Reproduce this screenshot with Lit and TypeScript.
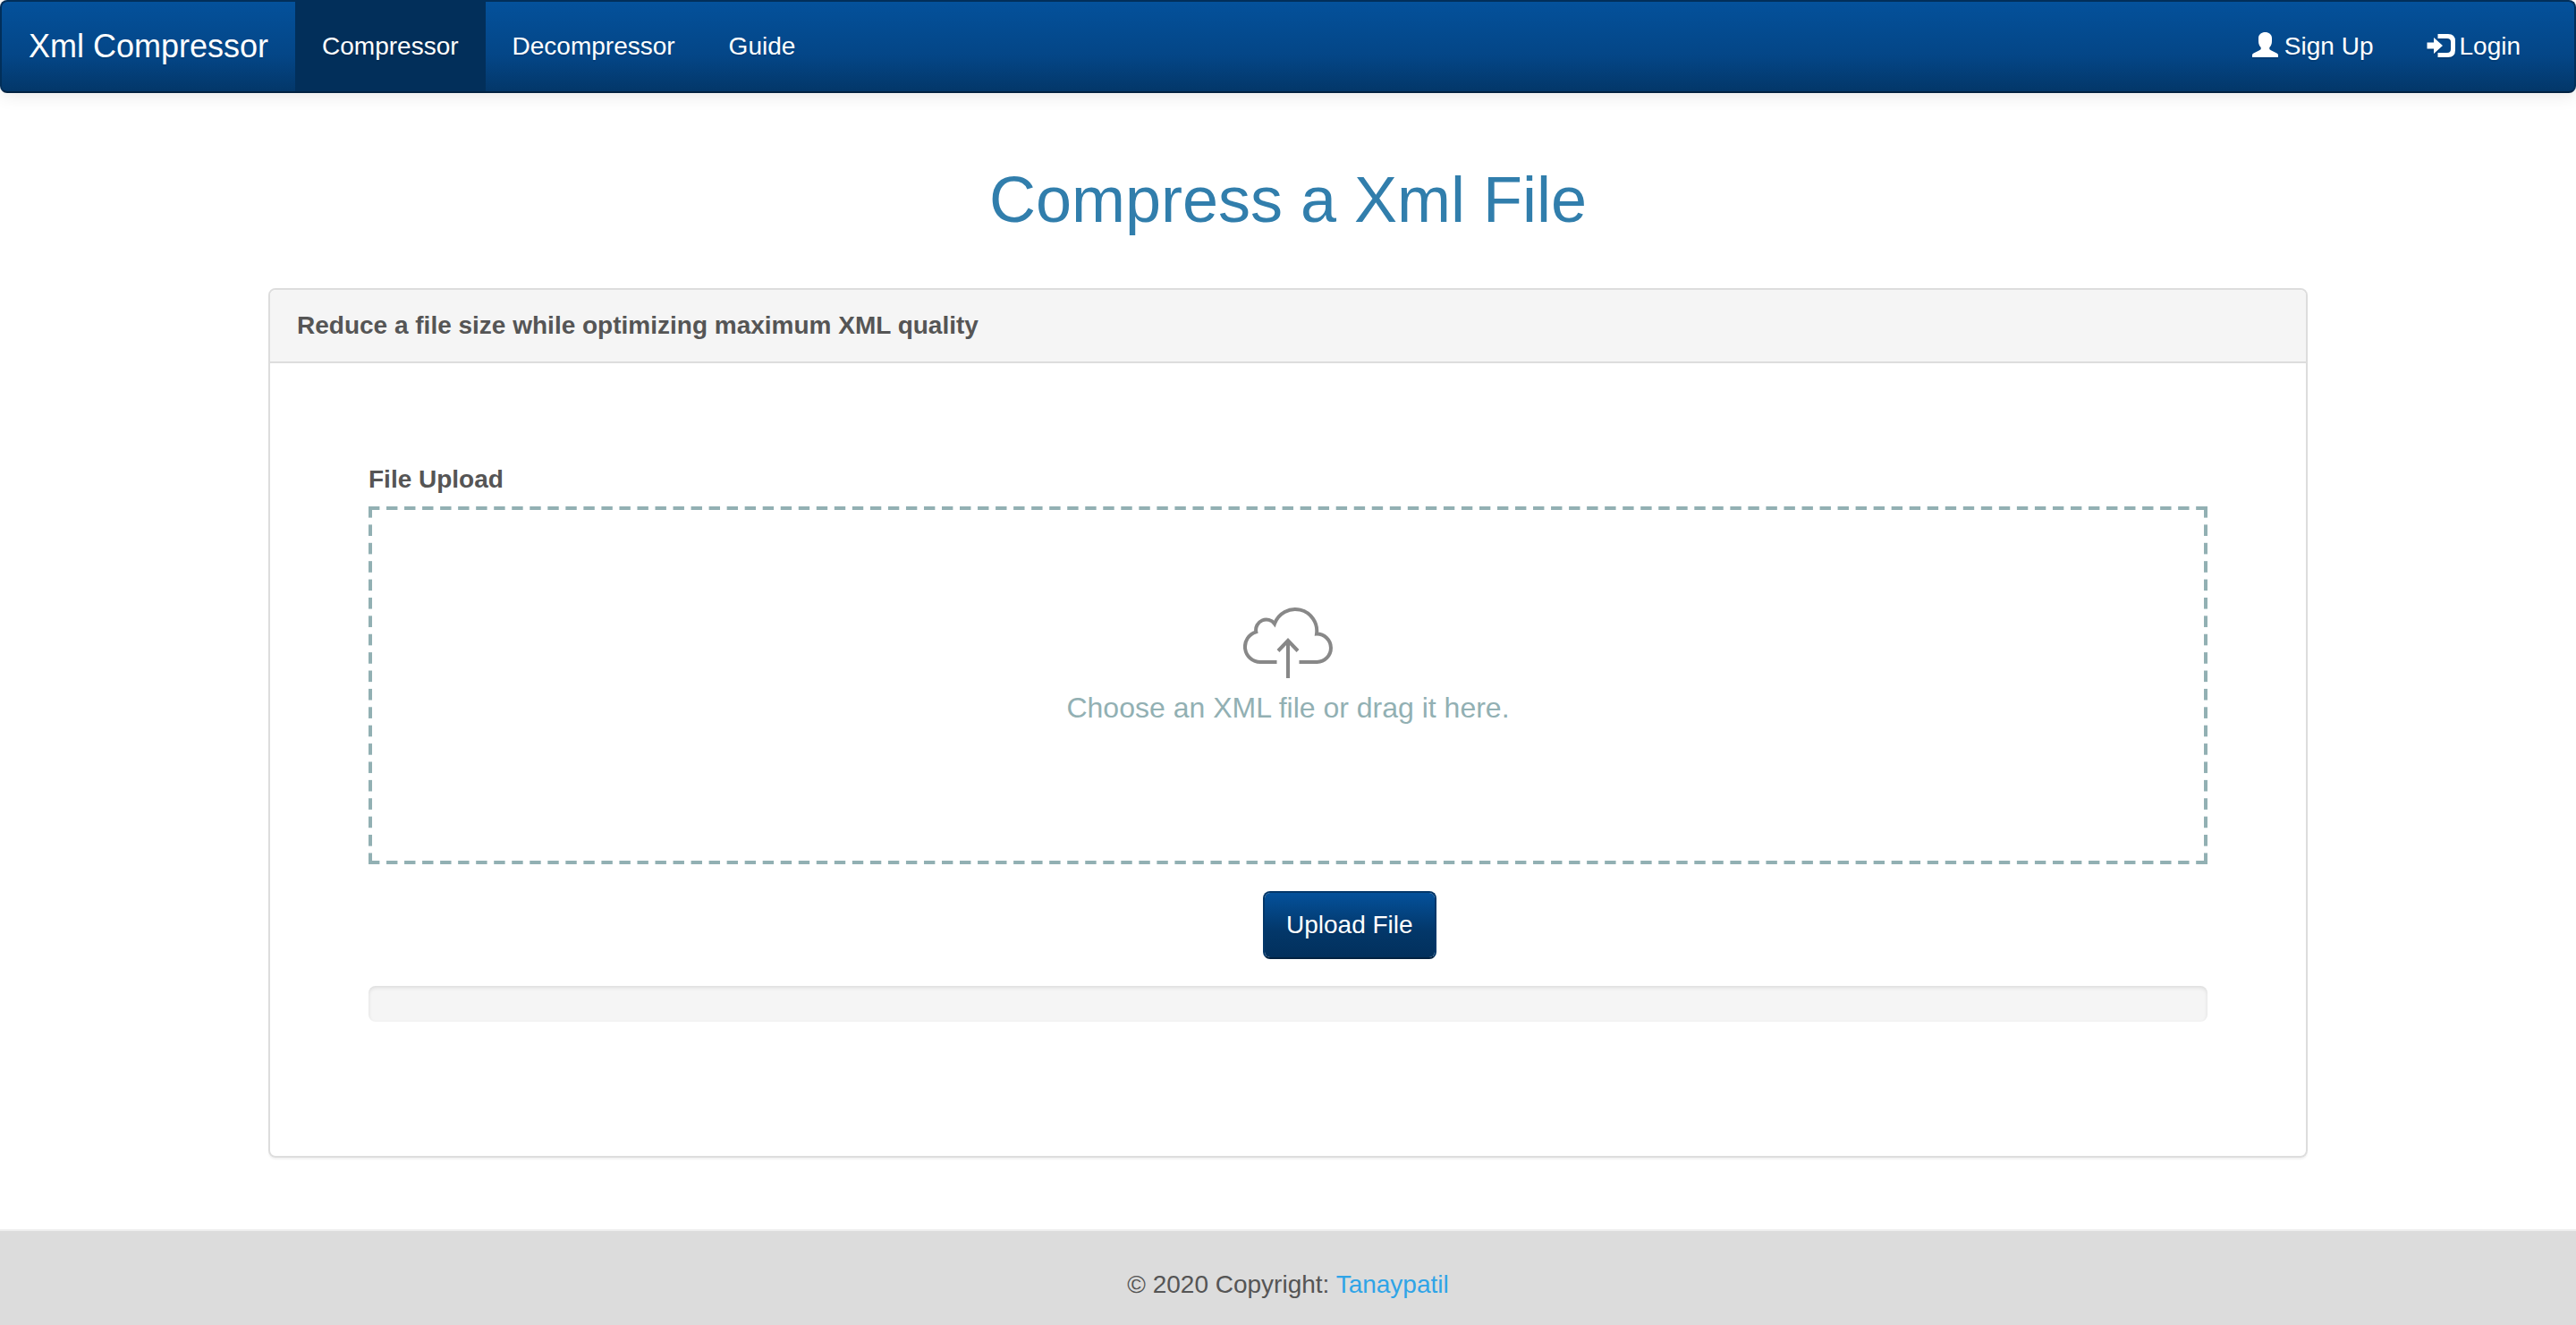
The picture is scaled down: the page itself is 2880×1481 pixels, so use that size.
import { LitElement, html, css } from "lit";
import { customElement, state } from "lit/decorators.js";

@customElement("app-navbar")
class AppNavbar extends LitElement {
  static styles = css`
    :host {
      display: block;
    }
    .navbar {
      display: flex;
      justify-content: space-between;
      border: 2px solid #022f5a;
      border-bottom-color: #022241;
      border-radius: 8px;
      padding-right: 30px;
      background: linear-gradient(#04519b, #044687 60%, #033769);
      box-shadow: 0 2px 20px rgba(0, 0, 0, 0.1);
      text-shadow: 0 2px 0 rgba(0, 0, 0, 0.1);
    }
    .group {
      display: flex;
    }
    .link {
      display: flex;
      gap: 8px;
      padding: 30px;
      color: #fff;
      text-decoration: none;
    }
    .brand {
      font-size: 36px;
    }
    .active {
      background: #022f5a;
    }
    .icon {
      width: 28px;
      height: 28px;
      margin-top: 4px;
      fill: #fff;
      overflow: visible;
      filter: drop-shadow(0 2px 0 rgba(0, 0, 0, 0.1));
    }
  `;

  render() {
    return html`
      <nav class="navbar" aria-label="Main">
        <div class="group">
          <a class="link brand" href="#">Xml Compressor</a>
          <a class="link active" href="#compressor" aria-current="page">Compressor</a>
          <a class="link" href="#decompressor">Decompressor</a>
          <a class="link" href="#guide">Guide</a>
        </div>
        <div class="group">
          <a class="link" href="#signup">
            <svg class="icon" viewBox="0 0 28 28" aria-hidden="true">
              <path d="M14.500 0C10.500 0 7 2.500 7 6.500V10C7 13 8 15.500 9.700 17V18.300C9.700 19.300 9 19.800 8 20.300L1.500 23.500C.5 24 0 24.700 0 25.500V28H29V25.500C29 24.700 28.500 24 27.500 23.500L21 20.300C20 19.800 19.300 19.300 19.300 18.300V17C21 15.500 22 13 22 10V6.500C22 2.500 18.500 0 14.500 0Z" />
            </svg>
            <span>Sign Up</span>
          </a>
          <a class="link" href="#login">
            <svg class="icon" viewBox="0 0 28 28" aria-hidden="true">
              <path d="M12.500 2H24Q32 2 32 10V20Q32 28 24 28H12.500V23H23Q27 23 27 19V11Q27 7 23 7H12.500Z" />
              <path d="M.5 11.500H8V6L18 15L8 24V18.500H.5Z" />
            </svg>
            <span>Login</span>
          </a>
        </div>
      </nav>
    `;
  }
}

@customElement("app-dropzone")
class AppDropzone extends LitElement {
  static styles = css`
    :host {
      display: block;
    }
    .title {
      display: block;
      margin-bottom: 10px;
      font-weight: 700;
    }
    .zone {
      position: relative;
      display: flex;
      flex-direction: column;
      align-items: center;
      gap: 6px;
      box-sizing: border-box;
      min-height: 400px;
      padding: 110px 24px;
      color: #92b0b3;
      font-size: 32px;
      line-height: 46px;
    }
    /* Dashed edges: 12px dash, 8px gap; each layer overhangs by one clipped gap so that every side ends on a dash. */
    .zone::before,
    .zone::after {
      content: "";
      position: absolute;
      pointer-events: none;
    }
    .zone::before {
      inset: 0 -8px 0 0;
      clip-path: inset(0 8px 0 0);
      background-image: linear-gradient(90deg, #92b0b3 60%, transparent 60%),
        linear-gradient(90deg, #92b0b3 60%, transparent 60%);
      background-size: 20px 4px;
      background-position: left top, left bottom;
      background-repeat: round no-repeat;
    }
    .zone::after {
      inset: 0 0 -8px 0;
      clip-path: inset(0 0 8px 0);
      background-image: linear-gradient(#92b0b3 60%, transparent 60%),
        linear-gradient(#92b0b3 60%, transparent 60%);
      background-size: 4px 20px;
      background-position: left top, right top;
      background-repeat: no-repeat round;
    }
    .cloud {
      width: 100px;
      height: 86px;
      fill: none;
      stroke: #888;
      stroke-width: 4;
    }
    .input {
      position: absolute;
      inset: 0;
      width: 100%;
      height: 100%;
      opacity: 0;
      cursor: pointer;
    }
  `;

  @state() private fileName = "";

  private onChange(event: Event) {
    const input = event.target as HTMLInputElement;
    this.fileName = input.files?.[0]?.name ?? "";
  }

  render() {
    return html`
      <label class="title" for="file">File Upload</label>
      <div class="zone">
        <svg class="cloud" viewBox="0 0 100 86" aria-hidden="true">
          <path d="M37.500 64H19A17.200 17.200 0 0 1 14.300 30.300A11.600 11.600 0 0 1 35 21.200A24.300 24.300 0 0 1 82 32.600A15.700 15.700 0 0 1 82.500 64H62.500" />
          <path d="M50 82V40M39 51.500L50 40L61 51.500" />
        </svg>
        <span>${this.fileName || "Choose an XML file or drag it here."}</span>
        <input class="input" id="file" type="file" accept=".xml" @change=${this.onChange} />
      </div>
    `;
  }
}

@customElement("app-root")
class AppRoot extends LitElement {
  static styles = css`
    :host {
      display: flex;
      flex-direction: column;
      min-height: 100vh;
      background: #fff;
      color: #555;
      font-family: "Liberation Sans", Arial, sans-serif;
      font-size: 28px;
      line-height: 40px;
    }
    .main {
      box-sizing: border-box;
      width: 100%;
      max-width: 2340px;
      margin: 0 auto;
      padding: 80px 30px;
    }
    .heading {
      margin: 0 0 60px;
      color: #317eac;
      font-size: 72px;
      font-weight: 400;
      line-height: 78px;
      text-align: center;
    }
    .panel {
      border: 2px solid #ddd;
      border-radius: 8px;
      box-shadow: 0 2px 2px rgba(0, 0, 0, 0.05);
    }
    .panel-heading {
      margin: 0;
      padding: 20px 30px;
      border-bottom: 2px solid #ddd;
      border-radius: 6px 6px 0 0;
      background: #f5f5f5;
      font-size: 28px;
      font-weight: 700;
      line-height: 40px;
    }
    .form {
      display: flex;
      flex-direction: column;
      gap: 30px;
      padding: 110px 110px 150px;
    }
    .submit {
      align-self: flex-start;
      margin-left: calc(50% - 28px);
      padding: 16px 24px;
      border: 2px solid #033769;
      border-bottom-color: #022241;
      border-radius: 8px;
      background: linear-gradient(#04519b, #033769 60%, #02305c) padding-box;
      color: #fff;
      font: inherit;
      text-shadow: 0 2px 0 rgba(0, 0, 0, 0.1);
      cursor: pointer;
    }
    .progress {
      height: 40px;
      border-radius: 8px;
      background: #f5f5f5;
      box-shadow: inset 0 2px 4px rgba(0, 0, 0, 0.1);
    }
    .footer {
      flex: 1;
      padding: 40px 30px 24px;
      border-top: 2px solid #eee;
      background: #dcdcdc;
      text-align: center;
    }
    .author {
      color: #2fa4e7;
      text-decoration: none;
    }
  `;

  render() {
    return html`
      <app-navbar></app-navbar>
      <main class="main">
        <h1 class="heading">Compress a Xml File</h1>
        <section class="panel">
          <h2 class="panel-heading">Reduce a file size while optimizing maximum XML quality</h2>
          <form class="form" @submit=${(e: Event) => e.preventDefault()}>
            <app-dropzone></app-dropzone>
            <button class="submit" type="submit">Upload File</button>
            <div class="progress" role="progressbar" aria-label="Upload progress" aria-valuemin="0" aria-valuemax="100" aria-valuenow="0"></div>
          </form>
        </section>
      </main>
      <footer class="footer">© 2020 Copyright: <a class="author" href="#tanaypatil">Tanaypatil</a></footer>
    `;
  }
}
